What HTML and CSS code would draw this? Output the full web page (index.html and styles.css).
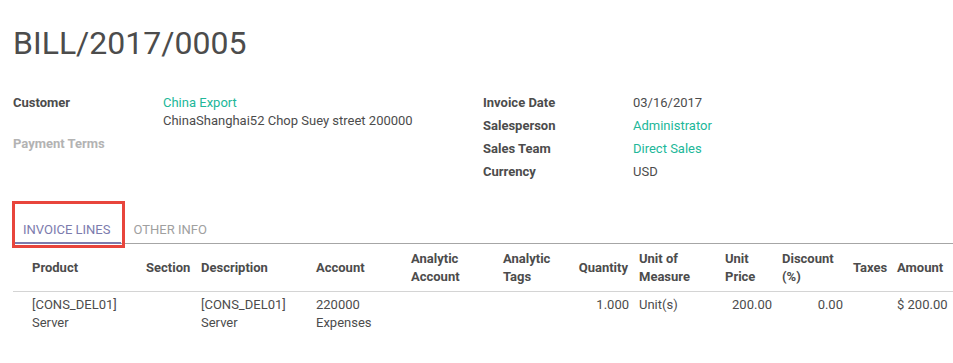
FILE: index.html
```html
<!DOCTYPE html>
<html>
<head>
<meta charset="utf-8">
<link rel="stylesheet" href="styles.css">
</head>
<body>
<div class="sheet">
  <h1 class="title">BILL/2017/0005</h1>
  <div class="groups">
    <div class="group">
      <div class="label">Customer</div>
      <div class="value"><span class="link">China Export</span><br>ChinaShanghai52 Chop Suey street 200000</div>
      <div class="label muted">Payment Terms</div>
      <div class="value"></div>
    </div>
    <div class="group">
      <div class="label">Invoice Date</div>
      <div class="value">03/16/2017</div>
      <div class="label">Salesperson</div>
      <div class="value"><span class="link">Administrator</span></div>
      <div class="label">Sales Team</div>
      <div class="value"><span class="link">Direct Sales</span></div>
      <div class="label">Currency</div>
      <div class="value">USD</div>
    </div>
  </div>
  <div class="tabs">
    <span class="tab active">INVOICE LINES</span>
    <span class="tab">OTHER INFO</span>
    <div class="highlight"></div>
  </div>
  <table class="lines">
    <thead>
      <tr>
        <th class="c-product">Product</th>
        <th class="c-section">Section</th>
        <th class="c-desc">Description</th>
        <th class="c-account">Account</th>
        <th class="c-aacc">Analytic<br>Account</th>
        <th class="c-tags">Analytic<br>Tags</th>
        <th class="c-qty num">Quantity</th>
        <th class="c-uom">Unit of<br>Measure</th>
        <th class="c-price">Unit<br>Price</th>
        <th class="c-disc">Discount<br>(%)</th>
        <th class="c-tax">Taxes</th>
        <th class="c-amount">Amount</th>
      </tr>
    </thead>
    <tbody>
      <tr>
        <td class="c-product">[CONS_DEL01]<br>Server</td>
        <td></td>
        <td>[CONS_DEL01]<br>Server</td>
        <td>220000<br>Expenses</td>
        <td></td>
        <td></td>
        <td class="num">1.000</td>
        <td>Unit(s)</td>
        <td class="num">200.00</td>
        <td class="num">0.00</td>
        <td></td>
        <td class="num">$ 200.00</td>
      </tr>
    </tbody>
  </table>
</div>
</body>
</html>
```

FILE: styles.css
```css
* { box-sizing: border-box; }
html, body { margin: 0; padding: 0; background: #fff; }
body {
  font-family: Roboto, "Liberation Sans", sans-serif;
  font-size: 13px;
  line-height: 18px;
  color: #4c4c4c;
  width: 953px;
  height: 363px;
  overflow: hidden;
}
.sheet { padding-left: 13px; }
.title {
  margin: 24px 0 0;
  font-size: 32px;
  line-height: 38px;
  font-weight: 400;
  color: #4c4c4c;
}
.groups {
  margin-top: 32px;
  display: grid;
  grid-template-columns: 470px 470px;
}
.group {
  display: grid;
  grid-template-columns: 150px 1fr;
  align-content: start;
}
.label, .value { padding-bottom: 5px; min-height: 23px; }
.label { font-weight: 700; color: #4c4c4c; }
.label.muted { color: #b3b3b3; }
.link { color: #21b799; }
.tabs {
  position: relative;
  margin-top: 15px;
  height: 43px;
  display: flex;
  align-items: flex-end;
  border-bottom: 1px solid #a6a6a6;
}
.tab {
  margin-left: 1px;
  margin-right: 2px;
  margin-bottom: -1px;
  padding: 20px 11px 3px 9px;
  border-bottom: 2px solid transparent;
  color: #a0a0a0;
}
.tab.active { color: #7c7bad; border-bottom-color: #7c7bad; margin-right: 2px; }
.highlight {
  position: absolute;
  left: -1px;
  top: 0;
  width: 113px;
  height: 47px;
  border: 3px solid #e8453c;
}
.lines {
  border-collapse: collapse;
  table-layout: fixed;
  width: 940px;
}
.lines th {
  font-weight: 700;
  text-align: left;
  vertical-align: middle;
  padding: 6px 5px 5px;
  border-bottom: 1px solid #d4d4d4;
}
.lines td {
  vertical-align: top;
  padding: 4px 5px;
  white-space: nowrap;
}
.lines .num { text-align: right; }
.lines .c-product { width: 128px; padding-left: 19px; }
.c-section { width: 55px; }
.c-desc { width: 115px; }
.c-account { width: 95px; }
.c-aacc { width: 92px; }
.c-tags { width: 72px; }
.lines .c-qty { width: 64px; padding-right: 6px; }
.c-uom { width: 86px; }
.c-price { width: 57px; }
.c-disc { width: 71px; }
.c-tax { width: 44px; }
.c-amount { width: 61px; }
.lines td.num:last-child { padding-right: 6px; }
```
